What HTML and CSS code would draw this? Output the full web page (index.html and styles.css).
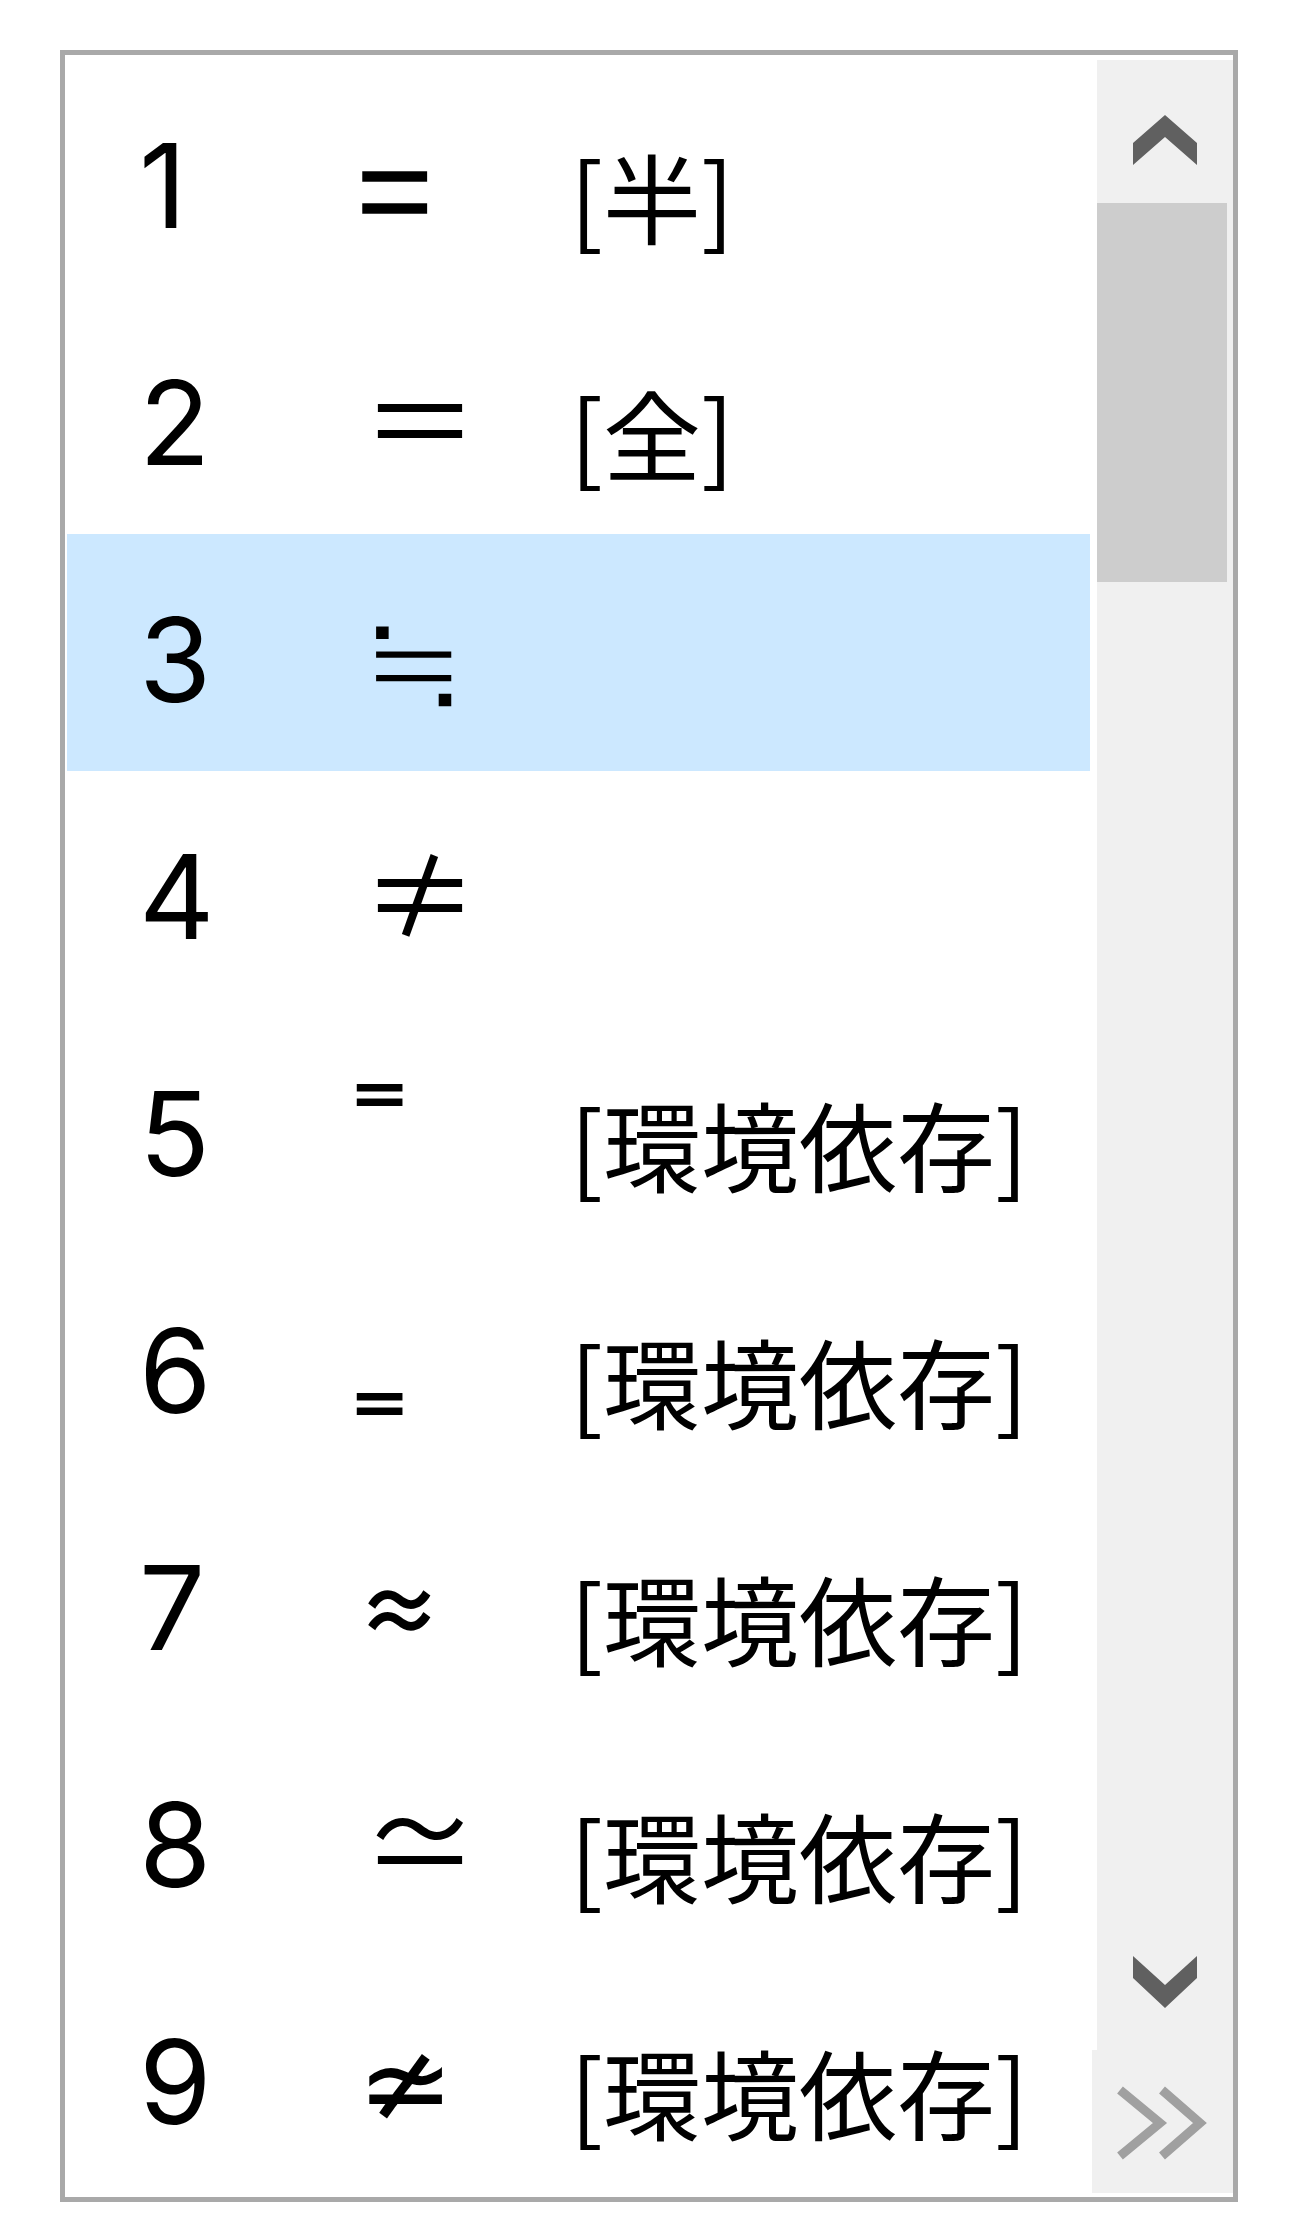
FILE: index.html
```html
<!DOCTYPE html>
<html lang="ja">
<head>
<meta charset="utf-8">
<title>候補一覧</title>
<link rel="stylesheet" href="styles.css">
</head>
<body>
<div class="ime">
  <div class="list">
    <div class="row"><span class="num">1</span><span class="sym s1">=</span><span class="note">[半]</span></div>
    <div class="row"><span class="num">2</span><span class="sym s2">＝</span><span class="note">[全]</span></div>
    <div class="row sel"><span class="num">3</span><span class="sym s3">≒</span><span class="note"></span></div>
    <div class="row"><span class="num">4</span><span class="sym s4">≠</span><span class="note"></span></div>
    <div class="row"><span class="num">5</span><span class="sym s5">⁼</span><span class="note">[環境依存]</span></div>
    <div class="row"><span class="num">6</span><span class="sym s6">₌</span><span class="note">[環境依存]</span></div>
    <div class="row"><span class="num">7</span><span class="sym s7">≈</span><span class="note">[環境依存]</span></div>
    <div class="row"><span class="num">8</span><span class="sym s8">≃</span><span class="note">[環境依存]</span></div>
    <div class="row"><span class="num">9</span><span class="sym s9">≄</span><span class="note">[環境依存]</span></div>
  </div>
  <div class="scroll">
    <div class="btn">
      <svg class="arrow" width="136" height="143" viewBox="0 0 136 143"><polygon points="36,83 68,55 100,83 100,105 68,77 36,105"/></svg>
    </div>
    <div class="track"><div class="thumb"></div></div>
    <div class="btn">
      <svg class="arrow" width="136" height="143" viewBox="0 0 136 143"><polygon points="36,49 68,78 100,49 100,71 68,101 36,71"/></svg>
    </div>
    <div class="more">
      <svg width="141" height="143" viewBox="0 0 141 143"><polyline points="28,40 68,73 28,106"/><polyline points="70,40 108,73 70,106"/></svg>
    </div>
  </div>
</div>
</body>
</html>
```
FILE: styles.css
```css
* { box-sizing: border-box; }
html, body { margin: 0; background: #fff; }
body { font-family: "Noto Sans CJK JP", "DejaVu Sans", sans-serif; color: #000; }

.ime {
  margin: 50px 0 0 60px;
  width: 1178px;
  height: 2152px;
  border: 5px solid #a9a9a9;
  padding: 5px 0 4px 2px;
  display: flex;
  gap: 7px;
  background: #fff;
}

.list { width: 1023px; display: flex; flex-direction: column; }

.row {
  height: 237px;
  display: flex;
  align-items: flex-start;
  padding-left: 72px;
}
.row.sel { background: #cce8ff; }

.num {
  width: 223px;
  font-family: Inter, "Noto Sans CJK JP", sans-serif;
  font-size: 117px;
  line-height: 1;
  margin-top: 67px;
}
.sym { width: 208px; font-size: 116px; line-height: 1; margin-top: 59px; }
.note { font-size: 98px; line-height: 1; margin-top: 85px; white-space: nowrap; }

/* per-glyph adjustments to match the IME font rendering */
.s1 { font-size: 132px; -webkit-text-stroke: 1.5px #000; margin-top: 58px; margin-left: -4px; margin-right: 4px; }
.s3 { font-family: "DejaVu Sans", sans-serif; font-weight: 200; font-size: 130px; margin-top: 60px; }
.s5 { font-weight: 700; margin-top: 36px; margin-left: -13px; margin-right: 13px; }
.s6 { font-weight: 700; margin-top: 70px; margin-left: -13px; margin-right: 13px; }
.s7 { font-weight: 700; font-size: 85px; margin-top: 81px; margin-left: -5px; margin-right: 5px; }
.s9 { margin-left: -5px; margin-right: 5px; }

.scroll { width: 136px; display: flex; flex-direction: column; }
.btn { height: 143px; background: #f0f0f0; }
.arrow { display: block; fill: #606060; }
.track { flex: 1; background: #f0f0f0; }
.thumb { height: 379px; margin-right: 6px; background: #cdcdcd; }
.more { height: 143px; width: 141px; margin-left: -5px; background: #f0f0f0; }
.more svg { display: block; fill: none; stroke: #a0a0a0; stroke-width: 9; }
```
